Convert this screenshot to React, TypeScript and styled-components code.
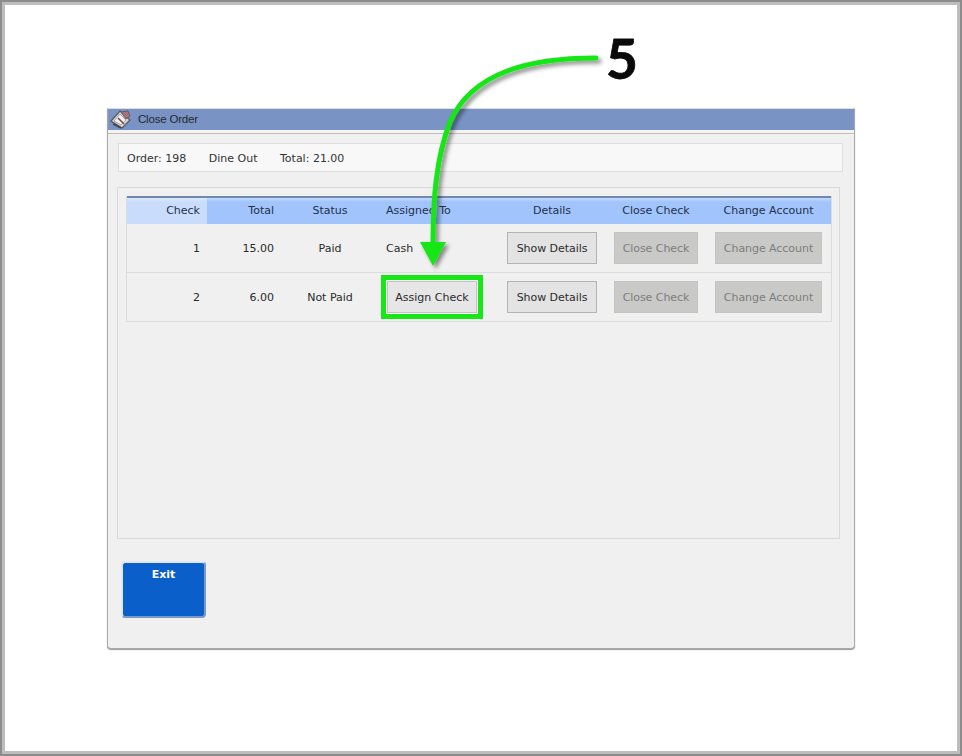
import React from "react";
import styled, { createGlobalStyle } from "styled-components";

const Global = createGlobalStyle`
  html, body { margin: 0; padding: 0; background: #fff; }
  body { font-family: "DejaVu Sans", Verdana, sans-serif; font-size: 11px; color: #333; }
`;

const Frame = styled.div`
  position: relative;
  box-sizing: border-box;
  width: 962px;
  height: 756px;
  background: #fff;
  border: 2px solid #8c8c8c;
  box-shadow: inset 0 0 0 3px #bdbdbd;
  padding: 106px 0 0 105px;
  overflow: hidden;
`;

const Window = styled.div`
  box-sizing: border-box;
  width: 748px;
  height: 541px;
  background: #f0f0f0;
  border: 1px solid #a9a9a9;
  border-top: 1px solid #d8dde6;
  border-radius: 0 0 4px 4px;
  box-shadow: 0 1px 1px #999;
  display: flex;
  flex-direction: column;
`;

const TitleBar = styled.div`
  height: 20px;
  background: #7893c4;
  display: flex;
  align-items: center;
  gap: 6px;
  padding: 0 0 1px 2px;
  font-family: "Liberation Sans", Arial, sans-serif;
  font-size: 11.5px;
  letter-spacing: -0.2px;
  color: #26282d;
  border-bottom: 3px solid #f4f4f4;
  box-shadow: 0 1px 0 #c4bcb8;
`;

const Content = styled.div`
  flex: 1;
  display: flex;
  flex-direction: column;
  padding: 10px 11px 0 9px;
`;

const OrderBar = styled.div`
  box-sizing: border-box;
  width: 725px;
  margin-left: 1px;
  height: 29px;
  background: #f8f8f8;
  border: 1px solid #dedede;
  display: flex;
  align-items: center;
  padding: 1px 0 0 8px;
  gap: 22.5px;
`;

const OrderText = styled.span`
  white-space: pre;
`;

const GridPanel = styled.div`
  box-sizing: border-box;
  width: 723px;
  height: 352px;
  margin-top: 15px;
  border: 1px solid #d9d9d9;
  padding: 8px;
`;

const Table = styled.div`
  width: 704px;
  border-left: 1px solid #dcdcdc;
  border-right: 1px solid #dcdcdc;
`;

const columns = "80px 74px 98px 121px 104px 104px 121px";

const HeadRow = styled.div`
  display: grid;
  grid-template-columns: ${columns};
  height: 28px;
  box-sizing: border-box;
  border-top: 2px solid #6f88ad;
  background: linear-gradient(#c4dafc 0, #a0c4fb 4px, #a0c4fb 100%);
  color: #23304a;
  & > div {
    padding-bottom: 2px;
  }
`;

const Row = styled.div`
  display: grid;
  grid-template-columns: ${columns};
  height: 49px;
  box-sizing: border-box;
  border-bottom: 1px solid #dcdcdc;
  color: #2a2a2a;
`;

const Cell = styled.div<{ $align?: string; $light?: boolean }>`
  display: flex;
  align-items: center;
  justify-content: ${(p) => p.$align || "center"};
  padding-right: ${(p) => (p.$align === "flex-end" ? "7px" : "0")};
  padding-left: ${(p) => (p.$align === "flex-start" ? "7px" : "0")};
  background: ${(p) => (p.$light ? "linear-gradient(#dbe7fd 0, #c9dcfc 5px)" : "transparent")};
  white-space: nowrap;
`;

const Button = styled.div<{ $disabled?: boolean; $w: number }>`
  box-sizing: border-box;
  width: ${(p) => p.$w}px;
  height: 32px;
  display: flex;
  align-items: center;
  justify-content: center;
  letter-spacing: -0.05px;
  background: ${(p) => (p.$disabled ? "#c9c9c7" : "#e3e3e3")};
  border: 1px solid ${(p) => (p.$disabled ? "#c4c4c2" : "#b4b4b4")};
  color: ${(p) => (p.$disabled ? "#7d7d7d" : "#2b2b2b")};
`;

const Highlight = styled.div`
  box-sizing: border-box;
  flex: none;
  width: 102px;
  height: 44px;
  margin: 0 0 0 -5px;
  border: 5px solid #17e617;
  display: flex;
  background: #fff;
  padding: 1px;
`;

const AssignButton = styled.div`
  flex: 1;
  display: flex;
  align-items: center;
  justify-content: center;
  background: #e6e6e6;
  border: 1px solid #c4c4c4;
  color: #2b2b2b;
`;

const Footer = styled.div`
  padding: 22px 0 0 4px;
`;

const ExitButton = styled.div`
  box-sizing: border-box;
  width: 85px;
  height: 57px;
  background: #0a5fcb;
  border: 2px solid #7c9bc4;
  border-top-color: #dfe8f4;
  border-left-color: #dfe8f4;
  border-radius: 4px;
  color: #fff;
  font-family: "DejaVu Sans", Verdana, sans-serif;
  font-weight: bold;
  font-size: 11px;
  text-align: center;
  padding-top: 5px;
`;

const Overlay = styled.svg`
  position: absolute;
  left: -2px;
  top: -2px;
  pointer-events: none;
`;

const StepNumber = styled.div`
  position: absolute;
  left: 604px;
  top: 23px;
  font-family: "Lato", "Open Sans", sans-serif;
  font-weight: 700;
  font-size: 55px;
  line-height: 66px;
  color: #0a0a0a;
  -webkit-text-stroke: 0.8px #0a0a0a;
`;

const AppIcon = () => (
  <svg width="22" height="20" viewBox="0 0 22 20">
    <path d="M1 12 L10 2 L20 11 L12 19 Z" fill="#d9d9dc" stroke="#55555c" strokeWidth="1.2" />
    <path d="M4 12 L10 5 L16 11 L11 16 Z" fill="#f3f1ee" stroke="#8b8b92" strokeWidth="0.8" />
    <path d="M11 3 L18 2 L20 7 L16 10 Z" fill="#a9727a" stroke="#5f4a55" strokeWidth="0.8" />
    <path d="M8 9 L14 15" stroke="#7a4a58" strokeWidth="1.6" />
    <path d="M3 15 L11 19" stroke="#44444a" strokeWidth="1.4" />
  </svg>
);

const rows = [
  { check: 1, total: "15.00", status: "Paid" },
  { check: 2, total: "6.00", status: "Not Paid" },
];

export default function App() {
  return (
    <>
      <Global />
      <Frame>
        <Window>
          <TitleBar>
            <AppIcon />
            Close Order
          </TitleBar>
          <Content>
            <OrderBar>
              <OrderText>Order: 198</OrderText>
              <OrderText>Dine Out</OrderText>
              <OrderText>Total: 21.00</OrderText>
            </OrderBar>
            <GridPanel>
              <Table>
                <HeadRow>
                  <Cell $align="flex-end" $light>Check</Cell>
                  <Cell $align="flex-end">Total</Cell>
                  <Cell>Status</Cell>
                  <Cell $align="flex-start">Assigned To</Cell>
                  <Cell>Details</Cell>
                  <Cell>Close Check</Cell>
                  <Cell>Change Account</Cell>
                </HeadRow>
                {rows.map((r) => (
                  <Row key={r.check}>
                    <Cell $align="flex-end">{r.check}</Cell>
                    <Cell $align="flex-end">{r.total}</Cell>
                    <Cell>{r.status}</Cell>
                    {r.check === 1 ? (
                      <Cell $align="flex-start">Cash</Cell>
                    ) : (
                      <Cell $align="flex-start">
                        <Highlight>
                          <AssignButton>Assign Check</AssignButton>
                        </Highlight>
                      </Cell>
                    )}
                    <Cell>
                      <Button $w={90}>Show Details</Button>
                    </Cell>
                    <Cell>
                      <Button $w={84} $disabled>Close Check</Button>
                    </Cell>
                    <Cell>
                      <Button $w={107} $disabled>Change Account</Button>
                    </Cell>
                  </Row>
                ))}
              </Table>
            </GridPanel>
            <Footer>
              <ExitButton>Exit</ExitButton>
            </Footer>
          </Content>
        </Window>
        <Overlay width="962" height="756" viewBox="0 0 962 756">
          <defs>
            <filter id="arrowShadow" x="-20%" y="-20%" width="140%" height="140%">
              <feDropShadow dx="3" dy="3" stdDeviation="2" floodColor="#000" floodOpacity="0.45" />
            </filter>
          </defs>
          <g filter="url(#arrowShadow)">
            <path
              d="M596 58 C 530 58 472 72 450 122 C 436 158 433 200 433 244"
              fill="none"
              stroke="#17e617"
              strokeWidth="5"
              strokeLinecap="round"
            />
            <path d="M420 242 L446 242 L433 266 Z" fill="#17e617" />
          </g>
        </Overlay>
        <StepNumber>5</StepNumber>
      </Frame>
    </>
  );
}
